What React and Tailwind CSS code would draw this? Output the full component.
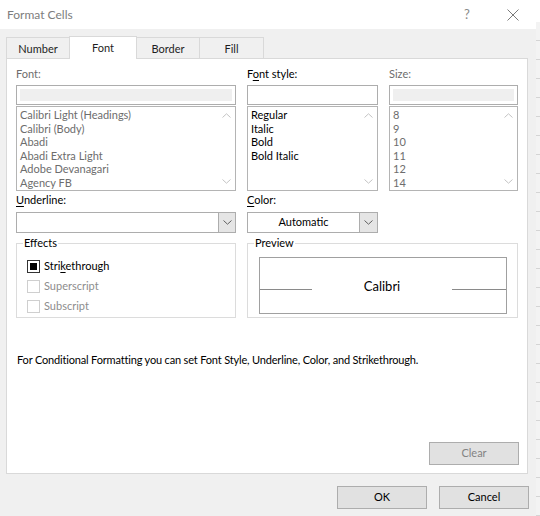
import React from "react";

// Format Cells dialog (conditional formatting, Font tab)

const fontList = [
  "Calibri Light (Headings)",
  "Calibri (Body)",
  "Abadi",
  "Abadi Extra Light",
  "Adobe Devanagari",
  "Agency FB",
];
const styleList = ["Regular", "Italic", "Bold", "Bold Italic"];
const sizeList = ["8", "9", "10", "11", "12", "14"];

const ChevronUp = ({ color = "#c4c4c4" }) => (
  <svg width="9" height="5" viewBox="0 0 9 5">
    <path d="M0.5 4.5L4.5 0.8L8.5 4.5" fill="none" stroke={color} strokeWidth="1" />
  </svg>
);

const ChevronDown = ({ color = "#c4c4c4" }) => (
  <svg width="9" height="5" viewBox="0 0 9 5">
    <path d="M0.5 0.5L4.5 4.2L8.5 0.5" fill="none" stroke={color} strokeWidth="1" />
  </svg>
);

function TextInput({ disabled }) {
  return (
    <div className="mt-[4px] h-[20px] border border-[#adadad] bg-white p-[3px]">
      {disabled && <div className="h-full bg-[#efefef]" />}
    </div>
  );
}

function ListBox({ items, disabled }) {
  return (
    <div className="mt-[1px] flex h-[85px] overflow-hidden border border-[#b4b4b4] bg-white">
      <div
        className={`flex-1 pt-[1px] pl-[3px] text-[11px] leading-[13.6px] ${
          disabled ? "text-[#6d6d6d]" : "text-black"
        }`}
      >
        {items.map((it) => (
          <div key={it} className="whitespace-nowrap">
            {it}
          </div>
        ))}
      </div>
      <div className="flex w-[17px] flex-col items-center justify-between pt-[6px] pb-[6px]">
        <ChevronUp />
        <ChevronDown />
      </div>
    </div>
  );
}

function Dropdown({ value, btnWidth }) {
  return (
    <div className="mt-[5px] flex h-[21px] border border-[#adadad] bg-white">
      <div className="flex flex-1 items-center justify-center text-[11px] text-black">{value}</div>
      <div
        className={`flex ${btnWidth} items-center justify-center border-l border-[#adadad] bg-[#e5e5e5]`}
      >
        <ChevronDown color="#606060" />
      </div>
    </div>
  );
}

function Check({ label, keyIdx, checked, disabled }) {
  return (
    <div className="flex h-[20px] items-center">
      <div
        className={`flex h-[13px] w-[13px] items-center justify-center border bg-white ${
          disabled ? "border-[#cfcfcf]" : "border-[#333333]"
        }`}
      >
        {checked && <div className="h-[7px] w-[7px] bg-black" />}
      </div>
      <span className={`ml-[4px] text-[11px] ${disabled ? "text-[#8d8d8d]" : "text-black"}`}>
        {keyIdx != null ? (
          <>
            {label.slice(0, keyIdx)}
            <span className="underline underline-offset-2">{label[keyIdx]}</span>
            {label.slice(keyIdx + 1)}
          </>
        ) : (
          label
        )}
      </span>
    </div>
  );
}

function Button({ children, disabled, className = "" }) {
  return (
    <div
      className={`flex h-[23px] w-[90px] items-center justify-center border border-[#adadad] bg-[#e1e1e1] text-[11px] ${
        disabled ? "text-[#838383]" : "text-black"
      } ${className}`}
    >
      {children}
    </div>
  );
}

const tabs = [
  { label: "Number", w: "w-[64px]" },
  { label: "Font", w: "w-[68px]", active: true },
  { label: "Border", w: "w-[64px]" },
  { label: "Fill", w: "w-[65px]" },
];

export default function App() {
  return (
    <div className="flex h-[516px] w-[540px] overflow-hidden bg-white font-['Lato','Open_Sans',sans-serif]">
      {/* dialog */}
      <div className="flex w-[536px] flex-col">
        {/* title bar */}
        <div className="flex h-[29px] items-center bg-white">
          <span className="pl-[7px] text-[12px] text-[#7d7d7d]">Format Cells</span>
          <span className="ml-auto w-[10px] text-center text-[13px] text-[#8a8a8a]">?</span>
          <span className="mr-[17px] ml-[35px] flex">
            <svg width="12" height="12" viewBox="0 0 12 12">
              <path d="M0.5 0.5L11.5 11.5M11.5 0.5L0.5 11.5" stroke="#7a7a7a" strokeWidth="1" />
            </svg>
          </span>
        </div>

        <div className="flex flex-1 flex-col bg-[#f0f0f0] pl-[6px]">
          {/* tabs */}
          <div className="mt-[7px] flex h-[22px] items-end">
            {tabs.map((t, i) => (
              <div
                key={t.label}
                className={`flex ${t.w} items-center justify-center border border-b-0 border-[#d9d9d9] text-[11px] text-[#1e1e1e] ${
                  i > 0 ? "-ml-px" : ""
                } ${
                  t.active
                    ? "relative z-10 -mb-px h-[23px] bg-white pt-[1px]"
                    : "h-[21px] bg-[#f0f0f0] pt-[3px]"
                }`}
              >
                {t.label}
              </div>
            ))}
          </div>

          {/* panel */}
          <div className="flex h-[416px] w-[522px] flex-col border border-[#d9d9d9] bg-white pt-[8px] pr-[8px] pb-[8px] pl-[9px]">
            <div className="grid grid-cols-[220px_131px_129px] gap-x-[11px]">
              {/* row 1 */}
              <div>
                <div className="h-[14px] text-[11px] leading-[14px] text-[#6d6d6d]">Font:</div>
                <TextInput disabled />
                <ListBox items={fontList} disabled />
              </div>
              <div>
                <div className="h-[14px] text-[11px] leading-[14px] text-black">
                  F<span className="underline underline-offset-2">o</span>nt style:
                </div>
                <TextInput />
                <ListBox items={styleList} />
              </div>
              <div>
                <div className="h-[14px] text-[11px] leading-[14px] text-[#6d6d6d]">Size:</div>
                <TextInput disabled />
                <ListBox items={sizeList} disabled />
              </div>

              {/* row 2 */}
              <div className="mt-[2px]">
                <div className="h-[14px] text-[11px] leading-[14px] text-black">
                  <span className="underline underline-offset-2">U</span>nderline:
                </div>
                <Dropdown value="" btnWidth="w-[17px]" />
              </div>
              <div className="mt-[2px]">
                <div className="h-[14px] text-[11px] leading-[14px] text-black">
                  <span className="underline underline-offset-2">C</span>olor:
                </div>
                <Dropdown value="Automatic" btnWidth="w-[18px]" />
              </div>
              <div />

              {/* row 3 */}
              <fieldset className="mt-[3px] h-[82px] border border-[#dcdcdc]">
                <legend className="ml-[6px] px-[1px] text-[11px] leading-[14px] text-black">
                  Effects
                </legend>
                <div className="pt-[6px] pl-[10px]">
                  <Check label="Strikethrough" keyIdx={4} checked />
                  <Check label="Superscript" disabled />
                  <Check label="Subscript" disabled />
                </div>
              </fieldset>
              <fieldset className="col-span-2 mt-[3px] h-[82px] border border-[#dcdcdc]">
                <legend className="ml-[6px] px-[1px] text-[11px] leading-[14px] text-black">
                  Preview
                </legend>
                <div className="mt-[7px] mr-[10px] ml-[11px] flex h-[57px] border border-[#a0a0a0]">
                  <div className="h-[32px] w-[52px] border-b border-[#8a8a8a]" />
                  <div className="flex flex-1 justify-center pt-[20px] text-[13px] leading-[16px] text-black">
                    Calibri
                  </div>
                  <div className="h-[32px] w-[54px] border-b border-[#8a8a8a]" />
                </div>
              </fieldset>
            </div>

            <div className="mt-[35px] pl-[1px] text-[11px] leading-[14px] tracking-[-0.17px] text-black">
              For Conditional Formatting you can set Font Style, Underline, Color, and Strikethrough.
            </div>

            <div className="mt-auto flex justify-end">
              <Button disabled>Clear</Button>
            </div>
          </div>

          {/* footer buttons */}
          <div className="mt-[12px] flex justify-end gap-[12px] pr-[7px]">
            <Button>OK</Button>
            <Button>Cancel</Button>
          </div>
        </div>
      </div>

      {/* sliver of the sheet behind */}
      <div className="flex w-[4px] flex-col bg-[#f3f3f3]">
        <div className="h-[29px] bg-white" />
        {Array.from({ length: 26 }).map((_, i) => (
          <div key={i} className="h-[19px] shrink-0 border-b border-[#d4d4d4]" />
        ))}
      </div>
    </div>
  );
}
